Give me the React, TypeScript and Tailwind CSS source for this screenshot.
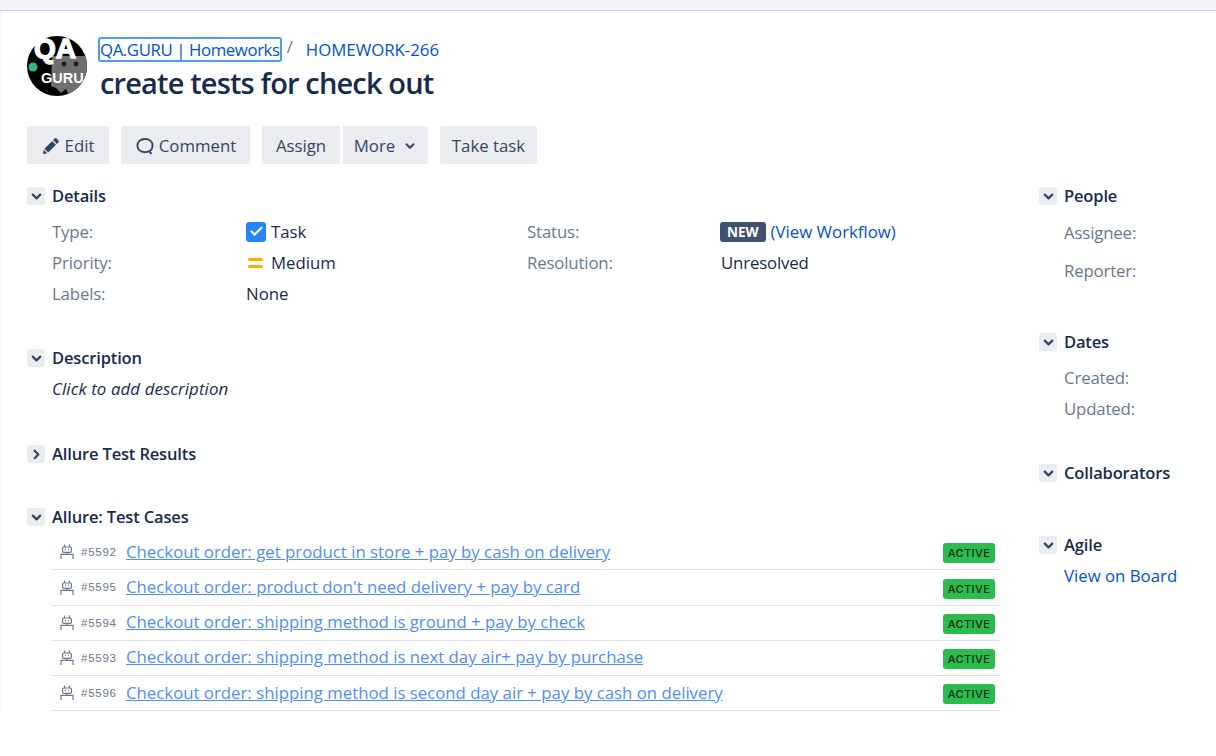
import React from 'react';
import { ChevronDown, ChevronRight, Check } from 'lucide-react';

const FONT = "font-['Open_Sans',sans-serif]";

const testCases = [
  { id: '#5592', title: 'Checkout order: get product in store + pay by cash on delivery' },
  { id: '#5595', title: "Checkout order: product don't need delivery + pay by card" },
  { id: '#5594', title: 'Checkout order: shipping method is ground + pay by check' },
  { id: '#5593', title: 'Checkout order: shipping method is next day air+ pay by purchase' },
  { id: '#5596', title: 'Checkout order: shipping method is second day air + pay by cash on delivery' },
];

function Logo() {
  return (
    <svg width="60" height="60" viewBox="0 0 60 60" className="shrink-0 overflow-visible">
      <defs>
        <clipPath id="logo-clip">
          <circle cx="30" cy="30" r="30" />
        </clipPath>
      </defs>
      <g clipPath="url(#logo-clip)">
        <rect width="60" height="60" fill="#000" />
        <path d="M25 20 L60 20 L60 60 L42 60 L39 53 L34 57 L29 52 L24 50 Z" fill="#6f6f6f" />
        <circle cx="37" cy="28" r="2.4" fill="#1c1c1c" />
        <circle cx="49" cy="28" r="2.4" fill="#1c1c1c" />
        <circle cx="6" cy="31" r="4.5" fill="#2fb98c" />
      </g>
      <text x="7" y="22" fontFamily="Liberation Sans" fontWeight="700" fontSize="28" stroke="#fff" strokeWidth="1.4" fill="#fff">QA</text>
      <text x="14" y="47" fontFamily="Liberation Sans" fontWeight="700" fontSize="14.5" fill="#fff">GURU</text>
    </svg>
  );
}

function RobotIcon() {
  return (
    <svg width="16" height="16" viewBox="0 0 16 16" fill="none" stroke="#6b778c" strokeWidth="1.2" className="shrink-0">
      <path d="M5.5 0.5v2.5M10.5 0.5v2.5" />
      <rect x="3.6" y="3" width="8.8" height="5.4" rx="1.2" />
      <path d="M6 5.5h.9M9.1 5.5h.9" strokeWidth="1.4" />
      <path d="M8 8.4v2" />
      <path d="M2 15v-4.6h12V15" />
    </svg>
  );
}

function PencilIcon() {
  return (
    <svg width="18" height="18" viewBox="0 0 18 18" fill="#344563" className="shrink-0">
      <path d="M12.6 1.6a1.4 1.4 0 0 1 2 0l1.8 1.8a1.4 1.4 0 0 1 0 2L14.9 6.9 11.1 3.1z" />
      <path d="M10.2 4 14 7.8 6.2 15.6 2.4 11.8z" />
      <path d="M1.8 12.8 5.2 16.2 1.6 17a.5.5 0 0 1-.6-.6z" />
    </svg>
  );
}

function Toggle({ open = true }: { open?: boolean }) {
  return (
    <span className="flex h-[18px] w-[18px] shrink-0 items-center justify-center rounded-[3px] bg-[#ebecf0] text-[#344563]">
      {open ? <ChevronDown size={15} strokeWidth={3.5} /> : <ChevronRight size={15} strokeWidth={3.5} />}
    </span>
  );
}

function Heading({ title, open }: { title: string; open?: boolean }) {
  return (
    <div className="flex h-[20px] items-center gap-[7px]">
      <Toggle open={open} />
      <h2 className="text-[16.5px] font-semibold tracking-[-0.15px] text-[#172b4d]">{title}</h2>
    </div>
  );
}

function ToolButton({ children, className = '' }: { children: React.ReactNode; className?: string }) {
  return (
    <button className={`flex h-[38px] items-center bg-[#ebecf0] pt-[2px] text-[#344563] ${className}`}>{children}</button>
  );
}

function Label({ children }: { children: React.ReactNode }) {
  return <span className="tracking-[-0.15px] text-[#6b778c]">{children}</span>;
}

function App() {
  return (
    <div className={`${FONT} h-[756px] w-[1216px] overflow-hidden bg-white text-[16.8px] text-[#172b4d]`}>
      <div className="h-[11px] border-b border-[#c9cede] bg-[#f4f5f7]" />

      <div className="flex border-l-2 border-[#f8f8f8] pl-[25px]">
        {/* Main column */}
        <div className="w-[973px]">
          <div className="flex h-[115px] gap-[13px] pt-[25px]">
            <Logo />
            <div>
              <div className="-ml-[2px] flex h-[27px] items-center text-[#0052cc]">
                <a className="rounded-[3px] border-2 border-[#4c9aff] leading-[21px] tracking-[-0.4px]">QA.GURU | Homeworks</a>
                <span className="ml-[5px] mr-[13px] -translate-y-[3px] text-[#6b778c]">/</span>
                <a>HOMEWORK-266</a>
              </div>
              <h1 className="text-[29px] font-semibold leading-[40px] tracking-[-0.85px] text-[#172b4d]">
                create tests for check out
              </h1>
            </div>
          </div>

          <div className="flex">
            <ToolButton className="mr-[12px] w-[82px] justify-center gap-[5px] rounded-[3px]">
              <PencilIcon />
              Edit
            </ToolButton>
            <ToolButton className="mr-[12px] w-[129px] justify-center gap-[4px] rounded-[3px]">
              <svg width="20" height="20" viewBox="0 0 20 20" fill="none" stroke="#344563" strokeWidth="1.9">
                <path d="M10 3c4.6 0 7.6 2.8 7.6 6.6s-3 6.6-7.6 6.6-7.6-2.8-7.6-6.6S5.400 3 10 3zM14 14.800l2.500 3" />
              </svg>
              Comment
            </ToolButton>
            <ToolButton className="mr-[3px] w-[78px] justify-center rounded-l-[3px]">Assign</ToolButton>
            <ToolButton className="mr-[12px] w-[85px] justify-center gap-[8px] rounded-r-[3px]">
              More
              <ChevronDown size={14} strokeWidth={3.5} />
            </ToolButton>
            <ToolButton className="w-[97px] justify-center rounded-[3px]">Take task</ToolButton>
          </div>

          <div className="mt-[22px]">
            <Heading title="Details" />
            <div className="mt-[10px] grid grid-cols-[194px_281px_193px_1fr] pl-[25px] [&>*]:flex [&>*]:h-[31px] [&>*]:items-center">
              <Label>Type:</Label>
              <span className="gap-[5px]">
                <span className="flex h-[20px] w-[20px] items-center justify-center rounded-[3px] bg-[#2684ff] text-white">
                  <Check size={15} strokeWidth={3.5} />
                </span>
                Task
              </span>
              <Label>Status:</Label>
              <span className="gap-[5px]">
                <span className="rounded-[3px] bg-[#42526e] px-[7px] text-[13.5px] font-bold leading-[20px] text-white">NEW</span>
                <a className="text-[#0052cc]">(View Workflow)</a>
              </span>
              <Label>Priority:</Label>
              <span className="gap-[8px]">
                <span className="ml-[2px] flex w-[15px] flex-col gap-[4px]">
                  <span className="h-[3px] rounded-sm bg-[#ffab00]" />
                  <span className="h-[3px] rounded-sm bg-[#ffab00]" />
                </span>
                Medium
              </span>
              <Label>Resolution:</Label>
              <span className="pl-[1px] tracking-[-0.15px]">Unresolved</span>
              <Label>Labels:</Label>
              <span>None</span>
            </div>
          </div>

          <div className="mt-[39px]">
            <Heading title="Description" />
            <p className="mt-[10px] pl-[25px] leading-[22px] tracking-[0.12px] italic">Click to add description</p>
          </div>

          <div className="mt-[44px]">
            <Heading title="Allure Test Results" open={false} />
          </div>

          <div className="mt-[43px]">
            <Heading title="Allure: Test Cases" />
            <div className="mt-[8.15px] ml-[25px]">
              {testCases.map((tc) => (
                <div key={tc.id} className="flex h-[35.25px] items-center border-b border-[#dfe1e6] pl-[7px] pr-[5px]">
                  <RobotIcon />
                  <span className="ml-[6px] w-[45px] pt-[1px] font-['Liberation_Sans',sans-serif] text-[11.5px] tracking-[0.75px] text-[#6b778c]">{tc.id}</span>
                  <a className="pb-[2px] text-[#4f8ef7] underline">{tc.title}</a>
                  <span className="ml-auto mt-[2px] w-[52px] rounded-[3px] bg-[#2cbb4e] text-center font-['Inter',sans-serif] text-[11px] font-medium leading-[20px] tracking-[0.4px] text-[#0b2b14]">ACTIVE</span>
                </div>
              ))}
            </div>
          </div>
        </div>

        {/* Side column */}
        <aside className="ml-[39px] flex-1 pt-[175px]">
          <Heading title="People" />
          <div className="pl-[25px] tracking-[-0.15px] text-[#6b778c]">
            <div className="mt-[8px] leading-[38px]">Assignee:</div>
            <div className="leading-[38px]">Reporter:</div>
          </div>
          <div className="mt-[42px]">
            <Heading title="Dates" />
            <div className="mt-[10px] pl-[25px] leading-[31px] tracking-[-0.15px] text-[#6b778c]">
              <div>Created:</div>
              <div>Updated:</div>
            </div>
          </div>
          <div className="mt-[39px]">
            <Heading title="Collaborators" />
          </div>
          <div className="mt-[52px]">
            <Heading title="Agile" />
            <a className="mt-[5px] block pl-[25px] leading-[31px] text-[#0052cc]">View on Board</a>
          </div>
        </aside>
      </div>
    </div>
  );
}

export default App;
